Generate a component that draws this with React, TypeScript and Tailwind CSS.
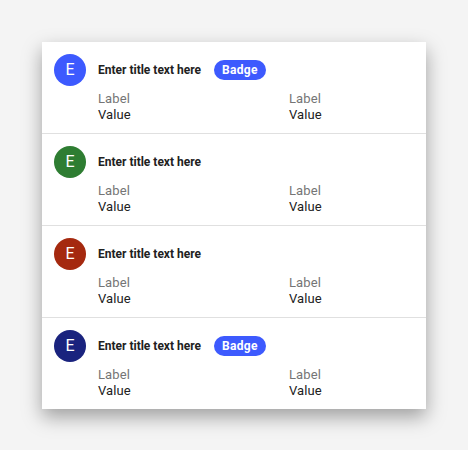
import React from "react";

const rows = [
  { color: "bg-[#3d5afe]", badge: true },
  { color: "bg-[#2e7d32]", badge: false },
  { color: "bg-[#a5290f]", badge: false },
  { color: "bg-[#1a237e]", badge: true },
];

export default function App() {
  return (
    <div
      className="min-h-[450px] w-full bg-[#f4f4f4] pl-[42px] pt-[42px]"
      style={{ fontFamily: "Roboto, 'Noto Sans', sans-serif" }}
    >
      <div className="w-[384px] bg-white shadow-[0_8px_18px_rgba(0,0,0,0.35)]">
        {rows.map((r, i) => (
          <div
            key={i}
            className={`flex gap-3 px-3 pt-3 pb-[10px] ${i < rows.length - 1 ? "border-b border-[#e0e0e0]" : ""}`}
          >
            <div
              className={`flex h-8 w-8 shrink-0 items-center justify-center rounded-full ${r.color} text-[16px] text-white`}
            >
              E
            </div>
            <div className="flex-1">
              <div className="flex h-8 items-center">
                <span className="text-[12px] font-bold text-[#212121]">Enter title text here</span>
                {r.badge && (
                  <span className="ml-[13px] flex h-5 items-center rounded-full bg-[#3d5afe] px-2 text-[12px] font-bold tracking-[0.3px] text-white">
                    Badge
                  </span>
                )}
              </div>
              <div className="mt-[5px] grid grid-cols-[191px_1fr] text-[13px] leading-4 tracking-[0.1px]">
                <div>
                  <div className="text-[#757575]">Label</div>
                  <div className="text-[#212121]">Value</div>
                </div>
                <div>
                  <div className="text-[#757575]">Label</div>
                  <div className="text-[#212121]">Value</div>
                </div>
              </div>
            </div>
          </div>
        ))}
      </div>
    </div>
  );
}
